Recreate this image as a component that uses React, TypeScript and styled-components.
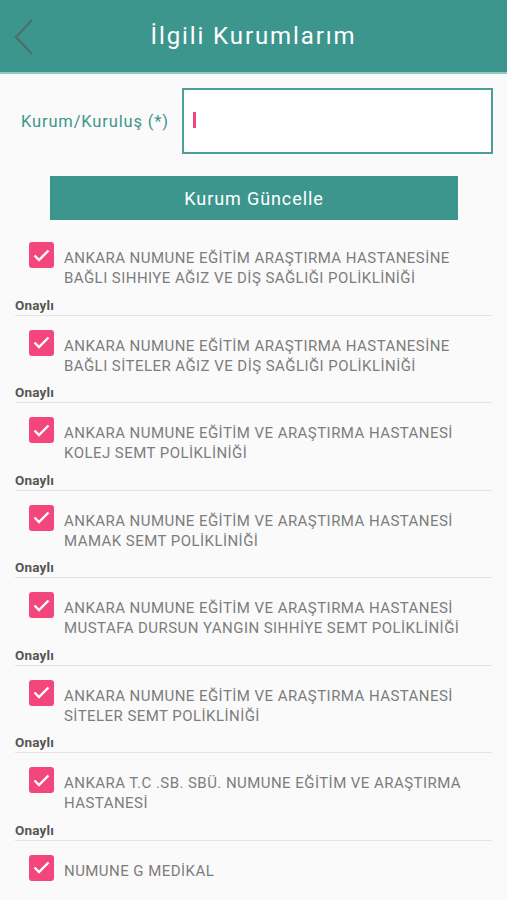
import { useState } from 'react';
import styled, { createGlobalStyle } from 'styled-components';

const GlobalStyle = createGlobalStyle`
  html, body {
    margin: 0;
    padding: 0;
    background-color: #fafafa;
  }

  body {
    font-family: Roboto, 'Noto Sans', 'Liberation Sans', sans-serif;
  }
`;

const institutions = [
  'ANKARA NUMUNE EĞİTİM ARAŞTIRMA HASTANESİNE BAĞLI SIHHIYE AĞIZ VE DİŞ SAĞLIĞI POLİKLİNİĞİ',
  'ANKARA NUMUNE EĞİTİM ARAŞTIRMA HASTANESİNE BAĞLI SİTELER AĞIZ VE DİŞ SAĞLIĞI POLİKLİNİĞİ',
  'ANKARA NUMUNE EĞİTİM VE ARAŞTIRMA HASTANESİ KOLEJ SEMT POLİKLİNİĞİ',
  'ANKARA NUMUNE EĞİTİM VE ARAŞTIRMA HASTANESİ MAMAK SEMT POLİKLİNİĞİ',
  'ANKARA NUMUNE EĞİTİM VE ARAŞTIRMA HASTANESİ MUSTAFA DURSUN YANGIN SIHHİYE SEMT POLİKLİNİĞİ',
  'ANKARA NUMUNE EĞİTİM VE ARAŞTIRMA HASTANESİ SİTELER SEMT POLİKLİNİĞİ',
  'ANKARA T.C .SB. SBÜ. NUMUNE EĞİTİM VE ARAŞTIRMA HASTANESİ',
  'NUMUNE G MEDİKAL',
];

const App = () => {
  const [checked, setChecked] = useState<boolean[]>(institutions.map(() => true));

  const toggle = (index: number) => {
    setChecked(prev => prev.map((value, i) => (i === index ? !value : value)));
  };

  return (
    <Container>
      <GlobalStyle />
      <Header>
        <BackButton aria-label="Geri">
          <svg width="20" height="38" viewBox="0 0 20 38">
            <polyline
              points="18,2 2,19 18,36"
              fill="none"
              stroke="#4f6d6b"
              strokeWidth="2.2"
            />
          </svg>
        </BackButton>
        <Title>İlgili Kurumlarım</Title>
      </Header>

      <FormRow>
        <Label>Kurum/Kuruluş (*)</Label>
        <InputBox>
          <Cursor />
        </InputBox>
      </FormRow>

      <ButtonRow>
        <UpdateButton>Kurum Güncelle</UpdateButton>
      </ButtonRow>

      <List>
        {institutions.map((name, index) => (
          <Item key={name} last={index === institutions.length - 1}>
            <Row onClick={() => toggle(index)}>
              <CheckBox checked={checked[index]}>
                {checked[index] && (
                  <svg width="17" height="13" viewBox="0 0 17 13">
                    <polyline
                      points="1.5,6.5 6,11 15.5,1.5"
                      fill="none"
                      stroke="#ffffff"
                      strokeWidth="2.4"
                    />
                  </svg>
                )}
              </CheckBox>
              <ItemText>{name}</ItemText>
            </Row>
            {index !== institutions.length - 1 && (
              <>
                <Status>Onaylı</Status>
                <Divider />
              </>
            )}
          </Item>
        ))}
      </List>
    </Container>
  );
};

export default App;

const Container = styled.div`
  display: flex;
  flex-direction: column;
  width: 100%;
  min-height: 100vh;
  background-color: #fafafa;
`;

const Header = styled.div`
  position: relative;
  display: flex;
  justify-content: center;
  align-items: center;
  height: 72px;
  background-color: #3d968d;
  border-bottom: 2px solid #8fcbc4;
`;

const BackButton = styled.div`
  position: absolute;
  left: 14px;
  top: 18px;
  display: flex;
`;

const Title = styled.div`
  color: #ffffff;
  font-size: 24px;
  letter-spacing: 1.9px;
`;

const FormRow = styled.div`
  display: flex;
  align-items: center;
  padding: 14px 14px 0 21px;
`;

const Label = styled.div`
  color: #3d968d;
  font-size: 16.5px;
  letter-spacing: 0.85px;
  width: 161px;
`;

const InputBox = styled.div`
  flex: 1;
  display: flex;
  align-items: center;
  height: 62px;
  border: 2px solid #4c9e96;
  background-color: #ffffff;
  padding-left: 9px;
`;

const Cursor = styled.div`
  width: 3px;
  height: 16px;
  background-color: #f2467d;
  margin-top: -2px;
`;

const ButtonRow = styled.div`
  display: flex;
  padding: 22px 49px 0 50px;
`;

const UpdateButton = styled.button`
  flex: 1;
  height: 44px;
  border: none;
  background-color: #3d968d;
  color: #ffffff;
  font-family: inherit;
  font-size: 18px;
  letter-spacing: 0.9px;
  cursor: pointer;
`;

const List = styled.div`
  display: flex;
  flex-direction: column;
  margin: 8px 15px 0 15px;
`;

const Item = styled.div<{ last?: boolean }>`
  padding-top: 14px;
  padding-bottom: ${({ last }) => (last ? '16px' : '0')};
`;

const Row = styled.div`
  display: flex;
  align-items: flex-start;
  gap: 10px;
  padding-left: 14px;
  cursor: pointer;
`;

const CheckBox = styled.div<{ checked?: boolean }>`
  flex-shrink: 0;
  display: flex;
  justify-content: center;
  align-items: center;
  width: 25px;
  height: 26px;
  border-radius: 3px;
  background-color: ${({ checked }) => (checked ? '#f2467d' : 'transparent')};
  border: ${({ checked }) => (checked ? 'none' : '2px solid #888')};
  box-sizing: border-box;
`;

const ItemText = styled.div`
  margin-top: 6px;
  color: #7d7d7d;
  font-size: 15px;
  letter-spacing: 0.45px;
  line-height: 20px;
  padding-right: 14px;
`;

const Status = styled.div`
  margin-top: 8.5px;
  color: #555555;
  font-size: 13.5px;
  letter-spacing: 0.2px;
  font-weight: 700;
  line-height: 16px;
`;

const Divider = styled.div`
  margin-top: 2px;
  height: 1px;
  background-color: #e4e4e4;
`;
